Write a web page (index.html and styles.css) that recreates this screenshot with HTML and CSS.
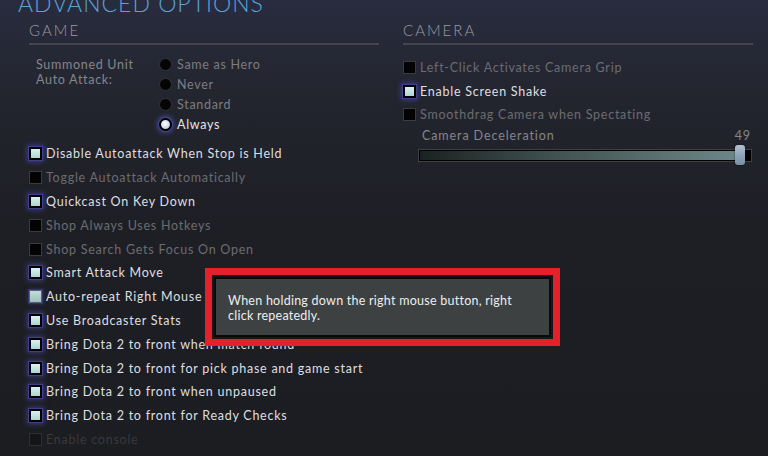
FILE: index.html
```html
<!DOCTYPE html>
<html>
<head>
<meta charset="utf-8">
<link rel="stylesheet" href="styles.css">
</head>
<body>
<div class="page">
  <div class="title">ADVANCED OPTIONS</div>
  <div class="columns">
    <section class="col">
      <div class="header">GAME</div>
      <div class="radio-group">
        <div class="radio-label">Summoned Unit<br>Auto Attack:</div>
        <div class="radios">
          <div class="radio-row"><span class="radio"></span><span>Same as Hero</span></div>
          <div class="radio-row"><span class="radio"></span><span>Never</span></div>
          <div class="radio-row"><span class="radio"></span><span>Standard</span></div>
          <div class="radio-row sel"><span class="radio"></span><span>Always</span></div>
        </div>
      </div>
      <div class="checks">
        <div class="row on"><span class="cb"></span><span>Disable Autoattack When Stop is Held</span></div>
        <div class="row"><span class="cb"></span><span>Toggle Autoattack Automatically</span></div>
        <div class="row on"><span class="cb"></span><span>Quickcast On Key Down</span></div>
        <div class="row"><span class="cb"></span><span>Shop Always Uses Hotkeys</span></div>
        <div class="row"><span class="cb"></span><span>Shop Search Gets Focus On Open</span></div>
        <div class="row on"><span class="cb"></span><span>Smart Attack Move</span></div>
        <div class="row on hover"><span class="cb"></span><span>Auto-repeat Right Mouse</span></div>
        <div class="row on"><span class="cb"></span><span>Use Broadcaster Stats</span></div>
        <div class="row on"><span class="cb"></span><span>Bring Dota 2 to front when match found</span></div>
        <div class="row on"><span class="cb"></span><span>Bring Dota 2 to front for pick phase and game start</span></div>
        <div class="row on"><span class="cb"></span><span>Bring Dota 2 to front when unpaused</span></div>
        <div class="row on"><span class="cb"></span><span>Bring Dota 2 to front for Ready Checks</span></div>
        <div class="row disabled"><span class="cb"></span><span>Enable console</span></div>
      </div>
    </section>
    <section class="col">
      <div class="header">CAMERA</div>
      <div class="cam-checks">
        <div class="row"><span class="cb"></span><span>Left-Click Activates Camera Grip</span></div>
        <div class="row on"><span class="cb"></span><span>Enable Screen Shake</span></div>
        <div class="row"><span class="cb"></span><span>Smoothdrag Camera when Spectating</span></div>
      </div>
      <div class="slider-label"><span>Camera Deceleration</span><span>49</span></div>
      <div class="slider">
        <div class="track"><div class="fill" style="width:96%"></div></div>
        <div class="thumb"></div>
      </div>
    </section>
  </div>
  <div class="tooltip-mark">
    <div class="tooltip">When holding down the right mouse button, right click repeatedly.</div>
  </div>
</div>
</body>
</html>
```
FILE: styles.css
```css
html, body {
  margin: 0;
  padding: 0;
}
body {
  width: 768px;
  height: 456px;
  overflow: hidden;
  font-family: "Lato", "Open Sans", sans-serif;
  background: linear-gradient(to bottom, #292c3f 0px, #23252f 90px, #1e1f25 220px, #1c1d21 456px);
}
.page {
  position: relative;
  display: flow-root;
  width: 768px;
  height: 456px;
}
.title {
  margin-top: -9px;
  padding-left: 18px;
  font-size: 23px;
  line-height: 24px;
  letter-spacing: 1px;
  color: #5ba3d9;
  font-weight: 300;
}
.columns {
  display: grid;
  grid-template-columns: 350px 350px;
  column-gap: 24px;
  padding-left: 29px;
  margin-top: 5px;
}
.header {
  font-size: 15px;
  line-height: 20px;
  letter-spacing: 2px;
  color: #9b9b9f;
  padding-bottom: 3px;
  border-bottom: 2px solid #44454d;
  font-weight: 300;
}
.radio-group {
  display: flex;
  margin-top: 9px;
}
.radio-label {
  width: 123px;
  padding-left: 7px;
  font-size: 12.5px;
  line-height: 15px;
  letter-spacing: 0.7px;
  color: #85868a;
  padding-top: 3px;
}
.radios {
  display: flex;
  flex-direction: column;
}
.radio-row {
  display: flex;
  align-items: center;
  gap: 5px;
  height: 20px;
  font-size: 12.5px;
  letter-spacing: 0.7px;
  color: #7c7d80;
}
.radio {
  width: 13px;
  height: 13px;
  box-sizing: border-box;
  border-radius: 50%;
  background: #050506;
  border: 1px solid #34353a;
}
.radio-row.sel {
  color: #e4e4e6;
}
.radio-row.sel .radio {
  border: 2px solid #000;
  background: radial-gradient(circle at 45% 40%, #ffffff 0%, #cfd6ea 60%, #a8b3d0 100%);
  box-shadow: 0 0 0 1px #45458f, 0 0 5px 2px rgba(100, 100, 220, 0.55);
}
.checks {
  margin-top: 8px;
  display: flex;
  flex-direction: column;
}
.cam-checks {
  margin-top: 11px;
  display: flex;
  flex-direction: column;
}
.row {
  display: flex;
  align-items: center;
  gap: 4px;
  height: 23.8px;
  font-size: 12.5px;
  letter-spacing: 0.75px;
  color: #6b6c70;
  white-space: nowrap;
}
.cam-checks .row {
  height: 23.6px;
}
.cb {
  width: 13px;
  height: 13px;
  box-sizing: border-box;
  flex: none;
  background: #030303;
  border: 1px solid #3a3b3f;
}
.row.on {
  color: #dedfe1;
}
.row.on .cb {
  border: 2px solid #000;
  background: linear-gradient(to bottom, #d9f1ef, #acd6d2);
  box-shadow: 0 0 0 1px #3f3f8c, 0 0 5px 2px rgba(90, 90, 210, 0.5);
}
.row.hover .cb {
  border: 1px solid #55606a;
  background: linear-gradient(to bottom, #c2dedb, #9dbfbb);
  box-shadow: 0 0 0 1px #333466, 0 0 4px 1px rgba(90, 90, 200, 0.35);
}
.row.disabled {
  color: #38393d;
}
.row.disabled .cb {
  background: #151517;
  border: 1px solid #2e2f33;
}
.slider-label {
  display: flex;
  justify-content: space-between;
  padding-left: 19px;
  padding-right: 2px;
  height: 18px;
  align-items: center;
  font-size: 12.5px;
  letter-spacing: 0.9px;
  color: #85868a;
}
.slider {
  position: relative;
  margin-top: 4px;
  margin-left: 15px;
  width: 334px;
  height: 13px;
}
.track {
  box-sizing: border-box;
  height: 13px;
  border: 1px solid #3c4144;
  background: #000;
  padding: 1px;
}
.fill {
  height: 100%;
  background: linear-gradient(to right, #1b2221 0%, #3e4f4e 40%, #62797a 85%, #6e8688 100%);
}
.thumb {
  position: absolute;
  left: 317px;
  top: -4px;
  width: 10px;
  height: 20px;
  border-radius: 3px;
  background: linear-gradient(to bottom, #b4c3d4, #8ea3b8 50%, #7890a7);
  box-shadow: 0 0 2px rgba(0, 0, 0, 0.6);
}
.tooltip-mark {
  position: absolute;
  left: 205px;
  top: 268px;
  width: 355px;
  height: 78px;
  box-sizing: border-box;
  border: 7px solid #e3212b;
  background: #16171b;
  padding: 2px;
}
.tooltip {
  box-sizing: border-box;
  height: 100%;
  border: 2px solid #0a0a0b;
  background: #3d4142;
  padding: 14px 12px 0 12px;
  font-size: 12.5px;
  line-height: 15px;
  letter-spacing: 0.25px;
  color: #eeeeee;
}
```
